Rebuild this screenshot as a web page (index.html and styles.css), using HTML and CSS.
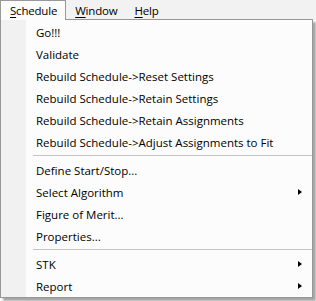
FILE: index.html
```html
<!DOCTYPE html>
<html lang="en">
<head>
  <meta charset="UTF-8" />
  <title>Schedule menu</title>
  <link rel="stylesheet" href="styles.css">
</head>
<body>
  <div class="menubar">
    <span class="top open"><u>S</u>chedule</span>
    <span class="top"><u>W</u>indow</span>
    <span class="top"><u>H</u>elp</span>
  </div>

  <div class="popup">
    <ul class="items">
      <li>Go!!!</li>
      <li>Validate</li>
      <li>Rebuild Schedule-&gt;Reset Settings</li>
      <li>Rebuild Schedule-&gt;Retain Settings</li>
      <li>Rebuild Schedule-&gt;Retain Assignments</li>
      <li>Rebuild Schedule-&gt;Adjust Assignments to Fit</li>
      <li class="sep"></li>
      <li>Define Start/Stop...</li>
      <li class="sub">Select Algorithm<i class="arrow"></i></li>
      <li>Figure of Merit...</li>
      <li>Properties...</li>
      <li class="sep"></li>
      <li class="sub">STK<i class="arrow"></i></li>
      <li class="sub">Report<i class="arrow"></i></li>
    </ul>
  </div>
</body>
</html>
```

FILE: styles.css
```css
/* Reset */
* { margin: 0; padding: 0; box-sizing: border-box; }

html, body {
  height: 100%;
  background: #fff;
  font-family: 'Open Sans', 'Noto Sans', sans-serif;
  font-size: 11.5px;
  color: #000;
  overflow: hidden;
}

/* top menu bar */
.menubar {
  display: flex;
  height: 20px;
  background: #f2f2f2;
}
.top {
  height: 20px;
  line-height: 19px;
  padding: 1px 8px 0 9px;
  letter-spacing: -0.2px;
}
.top u { text-decoration-thickness: 1px; text-underline-offset: 2px; }
.top.open {
  position: relative;
  z-index: 2;
  padding-top: 0;
  background: #fcfcfc;
  border: 1px solid #999;
  border-bottom: 0;
}

/* dropdown */
.popup {
  width: 313px;
  margin-top: -1px;
  border: 1px solid #979797;
  background:
    linear-gradient(to right, #f1f1f1 0, #f1f1f1 25px, #fcfcfc 25px);
  box-shadow: 3px 3px 2px rgba(0, 0, 0, 0.35);
  padding-top: 1px;
}
.items { list-style: none; }
.items li {
  display: flex;
  align-items: center;
  height: 22px;
  padding: 0 10px 0 35px;
  white-space: nowrap;
}
.items li.sep {
  height: 6px;
  padding: 0;
  margin-left: 32px;
  border-top: 2px solid transparent;
  background: linear-gradient(#c4c4c4, #c4c4c4) top / 100% 1px no-repeat content-box;
}
.arrow {
  margin-left: auto;
  width: 0;
  height: 0;
  border-left: 4px solid #000;
  border-top: 3.5px solid transparent;
  border-bottom: 3.5px solid transparent;
}
```
